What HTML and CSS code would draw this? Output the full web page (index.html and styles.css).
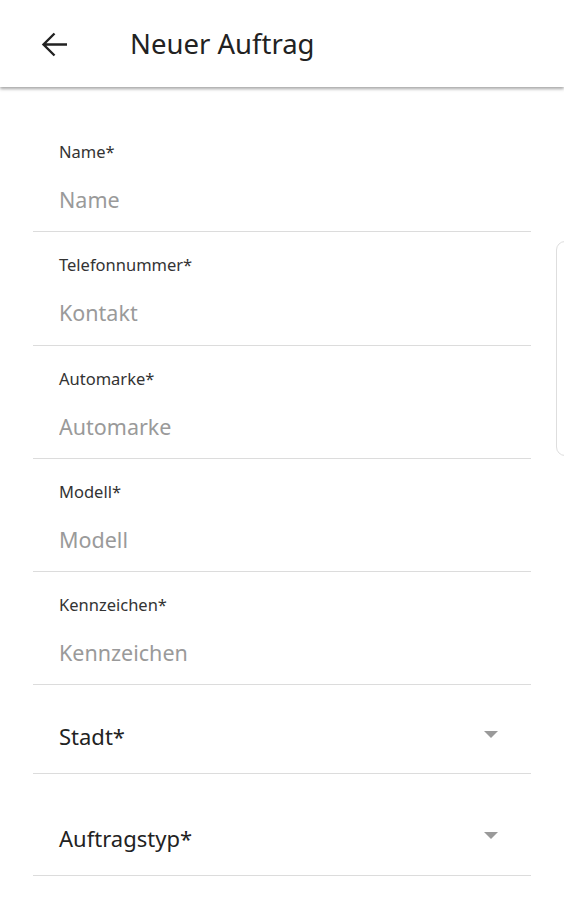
FILE: index.html
```html
<!DOCTYPE html>
<html lang="de">
<head>
    <meta charset="UTF-8">
    <meta name="viewport" content="width=device-width, initial-scale=1.0">
    <title>Neuer Auftrag</title>
    <link rel="stylesheet" href="styles.css">
</head>
<body>
    <header class="toolbar">
        <button class="back" aria-label="Zurück">
            <svg width="27" height="27" viewBox="0 0 27 27">
                <path d="M26 13.5H3 M13.5 2.5L2.5 13.5L13.5 24.5" fill="none" stroke="#222" stroke-width="2.4"/>
            </svg>
        </button>
        <h1 class="title">Neuer Auftrag</h1>
    </header>

    <form class="form">
        <label class="field">
            <span class="label">Name*</span>
            <input type="text" placeholder="Name">
        </label>
        <label class="field">
            <span class="label">Telefonnummer*</span>
            <input type="text" placeholder="Kontakt">
        </label>
        <label class="field">
            <span class="label">Automarke*</span>
            <input type="text" placeholder="Automarke">
        </label>
        <label class="field">
            <span class="label">Modell*</span>
            <input type="text" placeholder="Modell">
        </label>
        <label class="field">
            <span class="label">Kennzeichen*</span>
            <input type="text" placeholder="Kennzeichen">
        </label>

        <div class="select select-first">
            <span>Stadt*</span>
            <span class="caret"></span>
        </div>
        <div class="select">
            <span>Auftragstyp*</span>
            <span class="caret"></span>
        </div>
    </form>

    <div class="side-tab"></div>
</body>
</html>
```

FILE: styles.css
```css
body {
    margin: 0;
    font-family: "Noto Sans", Arial, sans-serif;
    background-color: #ffffff;
    color: #222;
    overflow: hidden;
}

.toolbar {
    height: 87px;
    display: flex;
    align-items: center;
    background-color: #ffffff;
    box-shadow: 0 2px 3px rgba(0, 0, 0, 0.35);
    position: relative;
}

.back {
    border: none;
    background: none;
    padding: 0;
    margin-left: 41px;
    margin-top: 1px;
    width: 27px;
    height: 27px;
    display: flex;
}

.title {
    margin: 0 0 0 62px;
    font-size: 27.5px;
    font-weight: 400;
    color: #222;
}

.form {
    padding: 32px 33px 0 33px;
    width: 498px;
}

.field {
    display: flex;
    flex-direction: column;
    height: 113.3px;
    box-sizing: border-box;
    border-bottom: 1.5px solid #dcdcdc;
    padding: 23px 0 0 26px;
}

.label {
    font-size: 16.5px;
    color: #333;
    line-height: 20px;
}

.field input {
    border: none;
    outline: none;
    padding: 0;
    margin-top: 24px;
    font-family: inherit;
    font-size: 21.5px;
    line-height: 28px;
    color: #333;
    background: none;
}

.field input::placeholder {
    color: #9a9a9a;
}

.select {
    display: flex;
    align-items: center;
    justify-content: space-between;
    box-sizing: border-box;
    height: 102px;
    padding: 26px 33px 0 26px;
    border-bottom: 1.5px solid #dcdcdc;
    font-size: 22px;
    color: #222;
}

.select-first {
    height: 89px;
    padding-top: 14px;
}

.caret {
    width: 0;
    height: 0;
    border-left: 7px solid transparent;
    border-right: 7px solid transparent;
    border-top: 7px solid #9a9a9a;
    margin-top: -4px;
}

.side-tab {
    position: absolute;
    left: 556px;
    top: 241px;
    width: 30px;
    height: 215px;
    border: 1.5px solid #dedede;
    border-radius: 9px;
    box-sizing: border-box;
}
```
